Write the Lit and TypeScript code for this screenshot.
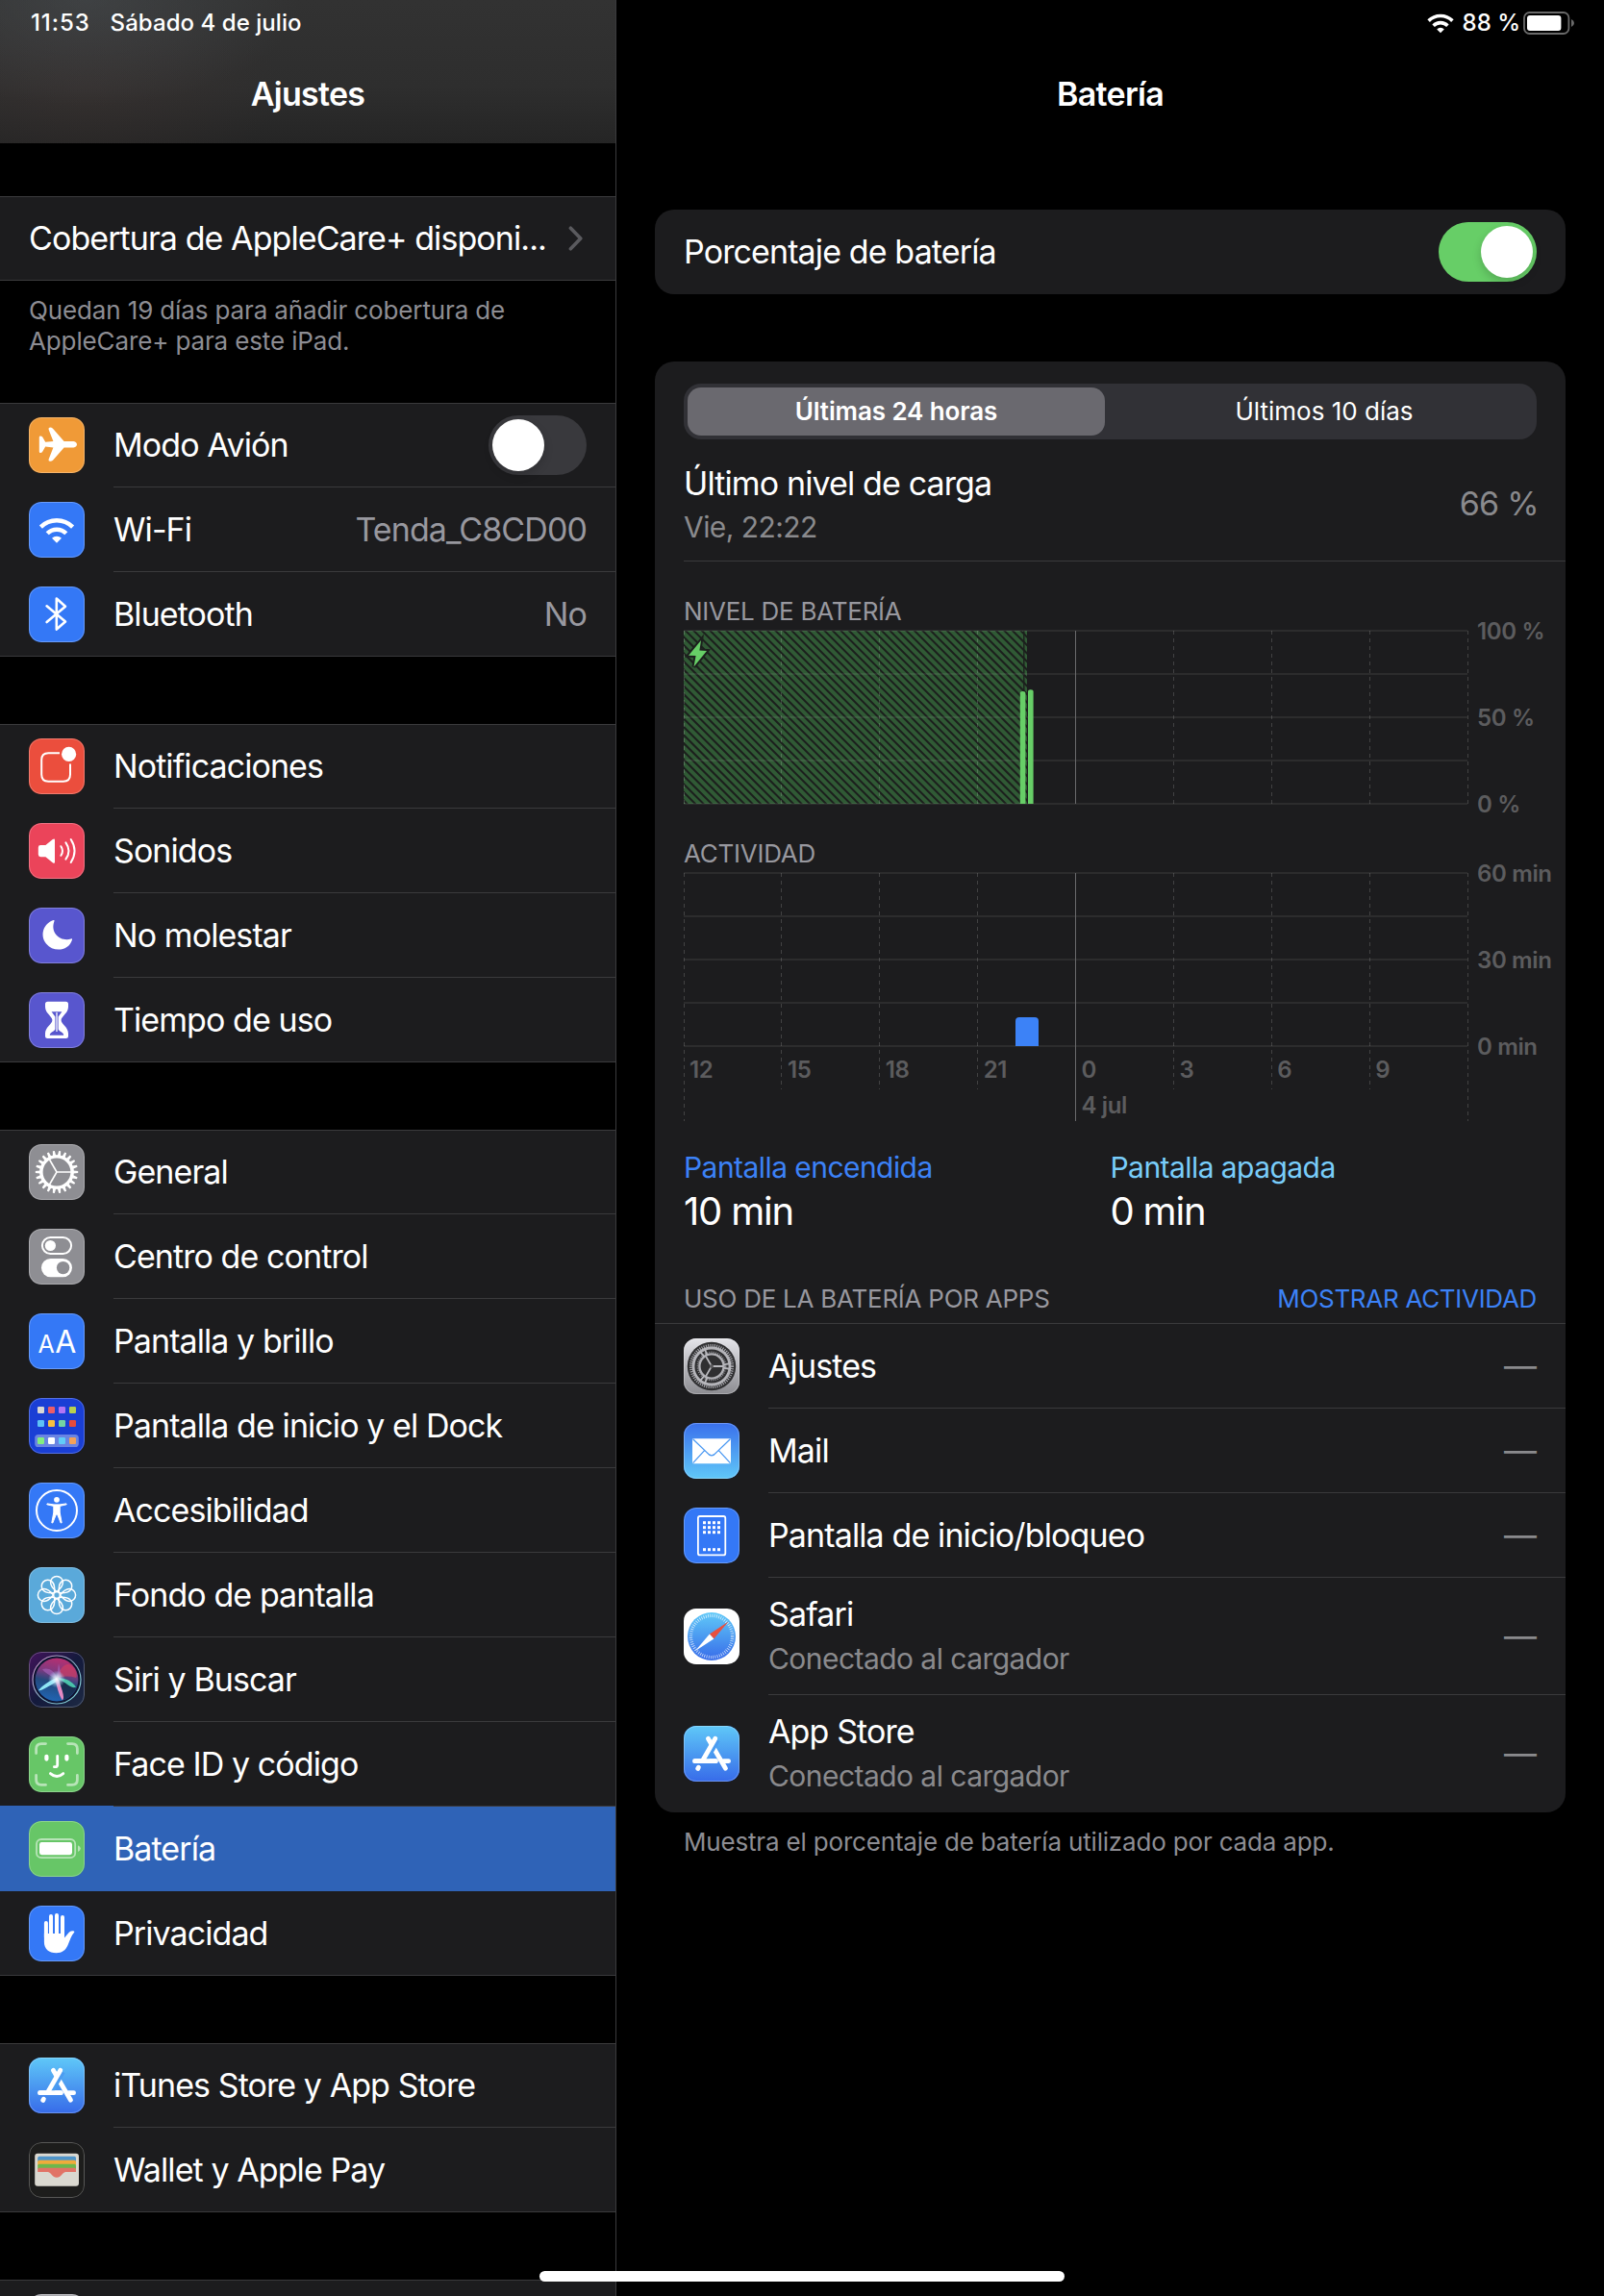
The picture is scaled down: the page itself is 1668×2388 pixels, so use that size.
import { LitElement, css, html, nothing, svg } from 'lit';
import type { TemplateResult } from 'lit';
import { customElement, property } from 'lit/decorators.js';
import { classMap } from 'lit/directives/class-map.js';

// All icons are drawn on a 58x58 grid, the tile itself comes from <icon-tile>.

function gearPath(teeth: number, outer: number, inner: number) {
  const step = (Math.PI * 2) / teeth;
  const at = (r: number, a: number) =>
    `${(29 + r * Math.cos(a)).toFixed(2)} ${(29 + r * Math.sin(a)).toFixed(2)}`;
  let d = '';
  for (let i = 0; i < teeth; i++) {
    const a = i * step;
    d += `${i ? 'L' : 'M'}${at(inner, a - step * 0.32)}L${at(outer, a - step * 0.16)}`;
    d += `L${at(outer, a + step * 0.16)}L${at(inner, a + step * 0.32)}`;
  }
  return d + 'Z';
}

const spokes = (r: number) =>
  [0, 120, 240].map(
    (a) => svg`<path d="M29 29H${29 + r}" transform="rotate(${a} 29 29)" />`
  );

const dots = (size: number, xs: number[], ys: number[]) =>
  ys.map((y) =>
    xs.map((x) => svg`<rect x=${x} y=${y} width=${size} height=${size} />`)
  );

const appStore = svg`
  <defs>
    <linearGradient id="store" x1="0" y1="0" x2="0" y2="1">
      <stop offset="0" stop-color="#5fc8f8" />
      <stop offset="1" stop-color="#376be9" />
    </linearGradient>
  </defs>
  <rect width="58" height="58" fill="url(#store)" />
  <g fill="none" stroke="#fff" stroke-width="4.8" stroke-linecap="round">
    <path d="M25.4 13.2 L43.5 44.3" />
    <path d="M11.6 36.7 H33.5 M41.5 36.7 H46.6" />
    <path d="M15.4 43.2 L14.7 44.5" />
    <path d="M34.6 14.5 L21.5 37.4" stroke="#4b9cf1" stroke-width="6.6" stroke-linecap="butt" />
    <path d="M32.8 13.2 L20 35.5" />
    <path d="M11.6 36.7 H33" />
  </g>`;

const petals = [0, 45, 90, 135, 180, 225, 270, 315];

const icons: Record<string, { bg: string; art: unknown }> = {
  airplane: {
    bg: '#f09a37',
    art: svg`<path fill="#fff" d="M46.5 24.9H36.6L25 11.7Q23.8 10.6 22 10.6Q20 10.8 20.6 12.7L25.4 24.9L17.2 25.8L14.2 20.6Q13.4 19.4 12 19.4Q10.8 19.4 10.8 20.7V35.7Q10.8 37 12 37Q13.4 37 14.2 35.8L17.2 30.6L25.4 31.5L20.6 43.7Q20 45.6 22 45.8Q23.8 45.8 25 44.7L36.6 31.5H46.5Q50 30.6 50 28.2Q50 25.8 46.5 24.9Z" />`,
  },
  wifi: {
    bg: '#3478f6',
    art: svg`
      <g fill="none" stroke="#fff" stroke-width="4.4">
        <path d="M12.4 26.1A23.5 23.5 0 0 1 45.6 26.1" />
        <path d="M19.2 32.8A13.9 13.9 0 0 1 38.8 32.8" />
      </g>
      <path fill="#fff" d="M29 42.8L24 37.8A7.1 7.1 0 0 1 34 37.8Z" />`,
  },
  bluetooth: {
    bg: '#3478f6',
    art: svg`<path fill="none" stroke="#fff" stroke-width="2.6" stroke-linecap="round" stroke-linejoin="round" d="M18.6 20.3L38 36.6L28.8 44.6V12.6L38 20.7L18.6 37" />`,
  },
  notifications: {
    bg: '#eb4e3d',
    art: svg`
      <path fill="none" stroke="#fff" stroke-width="2" d="M32 15.2H20.3Q13.2 15.2 13.2 22.3V37.6Q13.2 44.8 20.3 44.8H35.8Q43 44.8 43 37.6V26.4" />
      <circle cx="41.6" cy="16.4" r="7.6" fill="#fff" />`,
  },
  sounds: {
    bg: '#eb445a',
    art: svg`
      <path fill="#fff" d="M12.2 23H17.4L24.8 17Q27 15.6 27 17.8V40.6Q27 42.8 24.8 41.2L17.4 35.2H12.2Q9.8 35.2 9.8 32.8V25.4Q9.8 23 12.2 23Z" />
      <path fill="none" stroke="#fff" stroke-width="2" stroke-linecap="round" d="M33.4 24.2Q36.6 29 33.4 33.8M38.4 20.3Q44.6 29 38.4 37.7M43.7 17Q51.4 29 43.7 41" />`,
  },
  moon: {
    bg: '#5856ce',
    art: svg`<path fill="#fff" d="M25.6 13C14.6 16.8 11.4 29.2 18 37.4C26 47.2 41.4 45 45 33.4C45.2 32.4 44.7 32.1 43.8 32.5C33.4 35.6 21.8 27 26.4 14.2C26.7 13.2 26.4 12.7 25.6 13Z" />`,
  },
  hourglass: {
    bg: '#5856ce',
    art: svg`
      <path fill="#fff" d="M19.5 9.8H38.5Q41 9.8 41 12.3V15.2C41 21.8 33.6 25 33.6 29C33.6 33 41 36.2 41 42.8V45.6Q41 48.1 38.5 48.1H19.5Q17 48.1 17 45.6V42.8C17 36.2 24.4 33 24.4 29C24.4 25 17 21.8 17 15.2V12.3Q17 9.8 19.5 9.8Z" />
      <path fill="#5856ce" d="M23.6 20.2H34.4L30.6 25.4V38.6C31.4 41 36.2 41.6 36.2 44.8H21.8C21.8 41.6 26.6 41 27.4 38.6V25.4Z" />
      <path stroke="#fff" stroke-width="1.3" d="M29 21V41" />`,
  },
  gear: {
    bg: '#8e8e93',
    art: svg`
      <path fill="#fff" d=${gearPath(22, 22.2, 17.4)} />
      <circle cx="29" cy="29" r="16.1" fill="#8e8e93" stroke="#fff" stroke-width="3.4" />
      <g stroke="#fff" stroke-width="1.6">${spokes(15)}</g>`,
  },
  controls: {
    bg: '#8e8e93',
    art: svg`
      <rect x="13.9" y="8.9" width="30.2" height="17.2" rx="8.6" fill="none" stroke="#fff" stroke-width="2" />
      <circle cx="22.4" cy="17.5" r="5.6" fill="#fff" />
      <rect x="13" y="31" width="32" height="19.2" rx="9.6" fill="#fff" />
      <circle cx="35.6" cy="40.6" r="6.7" fill="#8e8e93" />`,
  },
  display: {
    bg: '#3478f6',
    art: svg`
      <g fill="#fff" font-family="Inter, sans-serif" font-weight="400">
        <text x="9.4" y="41.3" font-size="25">A</text>
        <text x="27.2" y="41.3" font-size="32">A</text>
      </g>`,
  },
  homeScreen: {
    bg: '#1a3fd5',
    art: svg`
      <rect x="6.2" y="38" width="45.6" height="13" rx="3.6" fill="#6a84e2" />
      ${[
        ['#d8d8d6', '#ec5d68', '#b275f5', '#b9d04f'],
        ['#5dc2f6', '#f6c040', '#73d4a2', '#e54b3c'],
        ['#83ee80', '#ffffff', '#60ccf8', '#f2a159'],
      ].map((row, r) =>
        row.map(
          (fill, c) =>
            svg`<rect x=${9 + c * 11} y=${[9, 23, 41][r]} width="7" height="7" rx="1.2" fill=${fill} />`
        )
      )}`,
  },
  accessibility: {
    bg: '#3478f6',
    art: svg`
      <circle cx="29" cy="29" r="21" fill="none" stroke="#fff" stroke-width="2" />
      <circle cx="29" cy="17.8" r="2.9" fill="#fff" />
      <path fill="#fff" stroke="#fff" stroke-width="1" stroke-linejoin="round" d="M19 21.9L26 22.9H32L39 21.9L39.2 22.8L32.2 24.4V31L34.2 41.8L33.2 42L29.6 33H28.4L24.8 42L23.8 41.8L25.8 31V24.4L18.8 22.8Z" />`,
  },
  wallpaper: {
    bg: '#5aa9da',
    art: svg`
      <g fill="none" stroke="#fff" stroke-width="1.5">
        ${petals.map(
          (a) =>
            svg`<path transform="rotate(${a} 29 29)" d="M29 25.6C25.6 22.8 22.6 20 22.6 15.8A6.4 6.4 0 0 1 35.4 15.8C35.4 20 32.4 22.8 29 25.6Z" />`
        )}
        <circle cx="29" cy="29" r="3.4" />
      </g>`,
  },
  siri: {
    bg: '#141a38',
    art: svg`
      <defs>
        <linearGradient id="siri-bg" x1="0" y1="0" x2="1" y2="1">
          <stop offset="0" stop-color="#43135c" />
          <stop offset=".5" stop-color="#141a3c" />
          <stop offset="1" stop-color="#1d2a44" />
        </linearGradient>
        <linearGradient id="siri-orb" x1=".6" y1="0" x2=".4" y2="1">
          <stop offset="0" stop-color="#b92f70" />
          <stop offset=".34" stop-color="#7d3a80" />
          <stop offset=".56" stop-color="#23497c" />
          <stop offset="1" stop-color="#2165b4" />
        </linearGradient>
        <linearGradient id="siri-ring" x1="0" y1="0" x2="1" y2="1">
          <stop offset="0" stop-color="#d58fc8" />
          <stop offset=".5" stop-color="#86a9c0" />
          <stop offset="1" stop-color="#7fe0e0" />
        </linearGradient>
        <radialGradient id="siri-glow">
          <stop offset="0" stop-color="#fff" />
          <stop offset=".4" stop-color="#d9f3ff" stop-opacity=".7" />
          <stop offset="1" stop-color="#9fd8ff" stop-opacity="0" />
        </radialGradient>
      </defs>
      <rect width="58" height="58" fill="url(#siri-bg)" />
      <circle cx="29" cy="29" r="25" fill="#0d1230" stroke="url(#siri-ring)" stroke-width="1.2" />
      <circle cx="29" cy="29" r="22.4" fill="url(#siri-orb)" />
      <path fill="#d8405f" opacity=".6" d="M29 28C31 18 38 10 44 14C49 18 51 24 49 27C42 25 35 25 29 28Z" />
      <path fill="#a868c0" opacity=".6" d="M28 28C22 25 16 21 14 18C20 16 26 19 29 26L31 12L34 26Z" />
      <path fill="#16243f" opacity=".75" d="M31 30C38 31 46 35 49 38C46 45 40 49 36 50Z" />
      <path fill="#4fd8b4" opacity=".85" d="M30 27.4C38 27 45 31 49 36.6C46.6 38.6 42 36 38 32.6Z" />
      <path fill="#8fe6f5" d="M29 27C22 30 14 35 10 40C12 41.4 20 36 30 30.4Z" />
      <path fill="#e58ac4" d="M27.6 29C29 36 31 44 34.4 50C36.6 50 36.4 46 34.6 40L31 29Z" />
      <circle cx="29" cy="28.5" r="9" fill="url(#siri-glow)" />`,
  },
  faceId: {
    bg: '#67c667',
    art: svg`
      <g fill="none" stroke-linecap="round">
        <path stroke="#b8e4b8" stroke-width="2.8" d="M7.6 17.5V13Q7.6 7.6 13 7.6H17.5M40.5 7.6H45Q50.4 7.6 50.4 13V17.5M50.4 40.5V45Q50.4 50.4 45 50.4H40.5M17.5 50.4H13Q7.6 50.4 7.6 45V40.5" />
        <path stroke="#fff" stroke-width="4.2" d="M18.4 20.8V23.6M39.4 20.8V23.6" />
        <path stroke="#fff" stroke-width="2.8" d="M29.7 20.4V29.4Q29.7 31.7 27.3 31.7H26.4M22.4 38.6Q29 44.4 35.8 38.6" />
      </g>`,
  },
  battery: {
    bg: '#67c667',
    art: svg`
      <rect x="8" y="19" width="40.2" height="19.2" rx="5" fill="none" stroke="#b8e4b8" stroke-width="1.8" />
      <rect x="11" y="22" width="34" height="13.2" rx="2.4" fill="#fff" />
      <path fill="#b8e4b8" d="M51 25.2Q53.8 26.4 53.8 28.6Q53.8 30.8 51 32Z" />`,
  },
  hand: {
    bg: '#3478f6',
    art: svg`
      <g stroke="#fff" stroke-width="4" stroke-linecap="round">
        <path d="M17.9 18V33M23 11V32M29 10V32M35 12V32" />
      </g>
      <path fill="#fff" d="M15.9 29H37V33.4L41.6 28Q43.6 25.6 47 26.6Q47.8 27.2 47 28C44.2 31 43 35.6 40.6 41C38.4 46.2 34.6 49.2 28.6 49.2C20.6 49.2 15.9 45.2 15.9 37.5Z" />`,
  },
  appStore: { bg: '#376be9', art: appStore },
  wallet: {
    bg: '#1d1d1c',
    art: svg`
      <rect x="6.2" y="11.8" width="45.8" height="34" rx="3" fill="#dad8d0" />
      <rect x="9.2" y="14.8" width="39.8" height="6" rx="1.6" fill="#5095c9" />
      <rect x="9.2" y="18.8" width="39.8" height="6" rx="1.6" fill="#efac3b" />
      <rect x="9.2" y="22.8" width="39.8" height="6" rx="1.6" fill="#6db74c" />
      <path fill="#e17366" d="M10.8 26.8H47.4Q49 26.8 49 28.4V31H38.5C35 31 33.6 36.8 29 36.8C24.4 36.8 23 31 19.5 31H9.2V28.4Q9.2 26.8 10.8 26.8Z" />`,
  },
  plain: { bg: '#a9a9ae', art: nothing },
  settingsApp: {
    bg: '#8e8e93',
    art: svg`
      <defs>
        <linearGradient id="metal" x1="0" y1="0" x2="0" y2="1">
          <stop offset="0" stop-color="#e4e4e9" />
          <stop offset="1" stop-color="#8c8c91" />
        </linearGradient>
      </defs>
      <rect width="58" height="58" fill="url(#metal)" />
      <circle cx="29" cy="29" r="25.2" fill="#2f2f31" />
      <circle cx="29" cy="29" r="21.6" fill="none" stroke="#a5a5aa" stroke-width="3" stroke-dasharray="1.1 1.16" />
      <circle cx="29" cy="29" r="19" fill="none" stroke="#b4b4b9" stroke-width="2.8" />
      <circle cx="29" cy="29" r="14.6" fill="none" stroke="#8d8d92" stroke-width="1.6" stroke-dasharray="1.1 1.16" />
      <circle cx="29" cy="29" r="12.6" fill="none" stroke="#b0b0b5" stroke-width="2.4" />
      <g stroke="#b8b8bd" stroke-width="1.8">
        ${[0, 120, 240].map(
          (a) =>
            svg`<path transform="rotate(${a} 29 29)" d="M29 29H41M41 27.4L49 26M41 30.6L49 32" />`
        )}
      </g>
      <circle cx="29" cy="29" r="2" fill="#5a5a5d" />`,
  },
  mail: {
    bg: '#3b72ee',
    art: svg`
      <defs>
        <linearGradient id="mail" x1="0" y1="0" x2="0" y2="1">
          <stop offset="0" stop-color="#3a70ec" />
          <stop offset="1" stop-color="#60c8f8" />
        </linearGradient>
      </defs>
      <rect width="58" height="58" fill="url(#mail)" />
      <rect x="9" y="16.2" width="40" height="26" rx="1" fill="#fff" />
      <path fill="none" stroke="#4a98f2" stroke-width="1.3" d="M9.6 16.8L24 30.6Q29 37 34 30.6L48.4 16.8M9.6 41.6L21.6 28.6M48.4 41.6L36.4 28.6" />`,
  },
  lockScreen: {
    bg: '#3478f6',
    art: svg`
      <rect x="14.9" y="9" width="28.4" height="40.4" rx="2" fill="none" stroke="#fff" stroke-width="1.8" />
      <g fill="#fff">${dots(3, [20, 25, 30, 35], [14.2, 19.2, 24.2, 42.2])}</g>`,
  },
  safari: {
    bg: '#ffffff',
    art: svg`
      <defs>
        <linearGradient id="safari" x1="0" y1="0" x2="0" y2="1">
          <stop offset="0" stop-color="#60c9f8" />
          <stop offset="1" stop-color="#376be9" />
        </linearGradient>
      </defs>
      <circle cx="29" cy="29" r="25" fill="url(#safari)" />
      <circle cx="29" cy="29" r="21.6" fill="none" stroke="#fff" stroke-opacity=".75" stroke-width="3.4" stroke-dasharray=".8 1.46" />
      <path fill="#e9503f" d="M46.6 13.6L26.9 26.5L31.3 31.6Z" />
      <path fill="#fff" d="M11.8 44.2L26.9 26.5L31.3 31.6Z" />`,
  },
};

@customElement('icon-tile')
export class IconTile extends LitElement {
  @property()
  name = '';

  render() {
    const icon = icons[this.name];
    return html`
      <svg viewBox="0 0 58 58">
        <rect width="58" height="58" fill=${icon.bg} />
        ${icon.art}
        <rect class="edge" x=".5" y=".5" width="57" height="57" rx="12.5" />
      </svg>
    `;
  }

  static styles = css`
    :host {
      display: block;
      flex: none;
      width: 58px;
      height: 58px;
      border-radius: 13px;
      overflow: hidden;
    }
    svg {
      display: block;
      width: 58px;
      height: 58px;
    }
    .edge {
      fill: none;
      stroke: #fff;
      stroke-opacity: 0.26;
    }
  `;
}

@customElement('toggle-switch')
export class ToggleSwitch extends LitElement {
  @property({ type: Boolean, reflect: true })
  on = false;

  render() {
    return html`<span class="knob"></span>`;
  }

  static styles = css`
    :host {
      display: flex;
      box-sizing: border-box;
      flex: none;
      width: 102px;
      height: 62px;
      padding: 4px;
      border-radius: 31px;
      background: #39393d;
    }
    :host([on]) {
      justify-content: flex-end;
      background: #67ce67;
    }
    .knob {
      width: 54px;
      height: 54px;
      border-radius: 50%;
      background: #fff;
      box-shadow: 0 4px 10px rgba(0, 0, 0, 0.18);
    }
  `;
}

const W = 815;
const TOP = 5;
const H = 180;
const hours = ['12', '15', '18', '21', '0', '3', '6', '9', ''];

// diagonal stripes over the charging period
const CHARGE_W = 357;
const STRIPE = 8.5;
const stripes = Array.from(
  { length: Math.ceil((CHARGE_W + H) / STRIPE) + 1 },
  (_, i) => `M${3.5 - H - 3 + (i * STRIPE)} -3l${H + 6} ${H + 6}`
).join('');

@customElement('usage-chart')
export class UsageChart extends LitElement {
  @property()
  kind: 'level' | 'activity' = 'level';

  private _grid(axis: string[]) {
    const isActivity = this.kind === 'activity';
    return svg`
      ${[0, 1, 2, 3, 4].map(
        (i) => svg`<path class="line" d="M0 ${TOP + i * 45}H${W}" />`
      )}
      ${hours.map((hour, i) => {
        const x = Math.floor((i * W) / 8) + 0.5;
        let end = TOP + H;
        if (isActivity) end += i % 4 === 0 ? 78 : 45;
        return svg`<path class=${hour === '0' ? 'midnight' : 'tick'} d="M${x} ${TOP}V${end}" />`;
      })}
      ${axis.map(
        (label, i) => svg`<text x="825" y=${TOP + i * 90 + 8.7}>${label}</text>`
      )}`;
  }

  private _level() {
    return svg`
      <svg class="charge" x="0" y=${TOP} width=${CHARGE_W} height=${H}>
        <rect width=${CHARGE_W} height=${H} fill="#305a35" />
        <path stroke="#1c1f1d" stroke-width="2" d=${stripes} />
      </svg>
      <path stroke="#1c1f1d" stroke-width="1.4" d="M353.8 ${TOP}V70" />
      ${this._grid(['100 %', '50 %', '0 %'])}
      <path class="bar" d="M349.8 ${TOP + H}V70.4Q349.8 68 352.6 68Q355.4 68 355.4 70.4V${TOP + H}Z" />
      <path class="bar" d="M358 ${TOP + H}V68.6Q358 66.2 360.8 66.2Q363.6 66.2 363.6 68.6V${TOP + H}Z" />
      <path class="bolt" d="M18 15L5 30.7L12.6 31L10.5 42.6L24 26L16.4 25.6Z" />`;
  }

  private _activity() {
    return svg`
      ${this._grid(['60 min', '30 min', '0 min'])}
      <path fill="#3c82f7" d="M345 ${TOP + H}V159Q345 155 349 155H365Q369 155 369 159V${TOP + H}Z" />
      ${hours.map(
        (hour, i) => svg`<text x=${6 + i * (W / 8)} y="218.3">${hour}</text>`
      )}
      <text x="413.5" y="255">4 jul</text>`;
  }

  render() {
    return html`
      <svg width="917" height=${this.kind === 'level' ? 220 : 293}>
        ${this.kind === 'level' ? this._level() : this._activity()}
      </svg>
    `;
  }

  static styles = css`
    :host,
    svg {
      display: block;
    }
    svg {
      overflow: visible;
    }
    .charge {
      overflow: hidden;
    }
    .line {
      stroke: rgba(255, 255, 255, 0.07);
      stroke-width: 2;
    }
    .tick {
      stroke: rgba(255, 255, 255, 0.17);
      stroke-width: 1;
      stroke-dasharray: 4 4;
    }
    .midnight {
      stroke: #6a6a6c;
      stroke-width: 1;
    }
    .bar {
      fill: #67ce67;
    }
    .bolt {
      fill: #67ce67;
      stroke: #1c1f1d;
      stroke-width: 4;
      paint-order: stroke;
    }
    text {
      fill: #5c5c5e;
      font-size: 24px;
      font-weight: 600;
      letter-spacing: -0.35px;
    }
  `;
}

interface Row {
  icon?: string;
  label: string;
  sub?: string;
  value?: string;
  toggle?: boolean;
  selected?: boolean;
}

const groups: Row[][] = [
  [
    { icon: 'airplane', label: 'Modo Avión', toggle: true },
    { icon: 'wifi', label: 'Wi-Fi', value: 'Tenda_C8CD00' },
    { icon: 'bluetooth', label: 'Bluetooth', value: 'No' },
  ],
  [
    { icon: 'notifications', label: 'Notificaciones' },
    { icon: 'sounds', label: 'Sonidos' },
    { icon: 'moon', label: 'No molestar' },
    { icon: 'hourglass', label: 'Tiempo de uso' },
  ],
  [
    { icon: 'gear', label: 'General' },
    { icon: 'controls', label: 'Centro de control' },
    { icon: 'display', label: 'Pantalla y brillo' },
    { icon: 'homeScreen', label: 'Pantalla de inicio y el Dock' },
    { icon: 'accessibility', label: 'Accesibilidad' },
    { icon: 'wallpaper', label: 'Fondo de pantalla' },
    { icon: 'siri', label: 'Siri y Buscar' },
    { icon: 'faceId', label: 'Face ID y código' },
    { icon: 'battery', label: 'Batería', selected: true },
    { icon: 'hand', label: 'Privacidad' },
  ],
  [
    { icon: 'appStore', label: 'iTunes Store y App Store' },
    { icon: 'wallet', label: 'Wallet y Apple Pay' },
  ],
  [{ icon: 'plain', label: '' }],
];

const apps: Row[] = [
  { icon: 'settingsApp', label: 'Ajustes' },
  { icon: 'mail', label: 'Mail' },
  { icon: 'lockScreen', label: 'Pantalla de inicio/bloqueo' },
  { icon: 'safari', label: 'Safari', sub: 'Conectado al cargador' },
  { icon: 'appStore', label: 'App Store', sub: 'Conectado al cargador' },
];

@customElement('app-root')
export class AppRoot extends LitElement {
  private _group(rows: Row[]): TemplateResult {
    return html`
      <div class="group">
        ${rows.map(
          (row) => html`
            <div class=${classMap({ row: true, selected: !!row.selected })}>
              <icon-tile name=${row.icon}></icon-tile>
              <div class="cell">
                <span class="label">${row.label}</span>
                ${row.value ? html`<span class="value">${row.value}</span>` : nothing}
                ${row.toggle ? html`<toggle-switch></toggle-switch>` : nothing}
              </div>
            </div>
          `
        )}
      </div>
    `;
  }

  private _sidebar() {
    return html`
      <aside>
        <header class="side-header">
          <div class="status">
            <span class="time">11:53</span>
            <span class="date">Sábado 4 de julio</span>
          </div>
          <h1>Ajustes</h1>
        </header>
        <div class="group coverage">
          <div class="row">
            <div class="cell">
              <span class="label">Cobertura de AppleCare+ disponi...</span>
              <svg class="chevron" width="16" height="26">
                <path d="M2.4 2.2L12.8 13L2.4 23.8" />
              </svg>
            </div>
          </div>
        </div>
        <p class="note">
          Quedan 19 días para añadir cobertura de<br />AppleCare+ para este iPad.
        </p>
        <nav>${groups.map((rows) => this._group(rows))}</nav>
      </aside>
    `;
  }

  private _status() {
    return html`
      <div class="status right">
        <svg class="wifi" width="28" height="21" viewBox="0 0 28 21">
          <g fill="none" stroke="#fff" stroke-width="3.6">
            <path d="M1.6 7.6A17.6 17.6 0 0 1 26.4 7.6" />
            <path d="M6.6 12.7A10.5 10.5 0 0 1 21.4 12.7" />
          </g>
          <path fill="#fff" d="M14 20.2L10.2 16.4A5.4 5.4 0 0 1 17.8 16.4Z" />
        </svg>
        <span>88 %</span>
        <svg class="level" width="54" height="24" viewBox="0 0 54 24">
          <rect x="1" y="1" width="46.4" height="22" rx="5.6" fill="none" stroke="#6a6a6a" stroke-width="1.8" />
          <rect x="4" y="4" width="35.4" height="16" rx="3" fill="#fff" />
          <path fill="#6a6a6a" d="M50 8Q53 9.4 53 12Q53 14.6 50 16Z" />
        </svg>
      </div>
    `;
  }

  private _detail() {
    return html`
      <main>
        <header>
          ${this._status()}
          <h1>Batería</h1>
        </header>
        <section class="card percent">
          <span class="label">Porcentaje de batería</span>
          <toggle-switch on></toggle-switch>
        </section>
        <section class="card">
          <div class="segments">
            <span class="active">Últimas 24 horas</span>
            <span>Últimos 10 días</span>
          </div>
          <div class="summary">
            <div>
              <div class="label">Último nivel de carga</div>
              <div class="sub">Vie, 22:22</div>
            </div>
            <span class="amount">66 %</span>
          </div>
          <div class="charts">
            <h2>NIVEL DE BATERÍA</h2>
            <usage-chart kind="level"></usage-chart>
            <h2>ACTIVIDAD</h2>
            <usage-chart kind="activity"></usage-chart>
          </div>
          <div class="stats">
            <div>
              <div class="stat-name on">Pantalla encendida</div>
              <div class="stat-value">10 min</div>
            </div>
            <div>
              <div class="stat-name off">Pantalla apagada</div>
              <div class="stat-value">0 min</div>
            </div>
          </div>
          <div class="list-head">
            <h2>USO DE LA BATERÍA POR APPS</h2>
            <a>MOSTRAR ACTIVIDAD</a>
          </div>
          <div class="apps">
            ${apps.map(
              (app) => html`
                <div class=${classMap({ row: true, tall: !!app.sub })}>
                  <icon-tile name=${app.icon}></icon-tile>
                  <div class="cell">
                    <div class="names">
                      <div class="label">${app.label}</div>
                      ${app.sub ? html`<div class="sub">${app.sub}</div>` : nothing}
                    </div>
                    <span class="dash">—</span>
                  </div>
                </div>
              `
            )}
          </div>
        </section>
        <p class="note">Muestra el porcentaje de batería utilizado por cada app.</p>
      </main>
    `;
  }

  render() {
    return html`
      ${this._sidebar()} ${this._detail()}
      <div class="home-indicator"></div>
    `;
  }

  static styles = css`
    :host {
      display: flex;
      position: relative;
      width: 1668px;
      height: 2388px;
      overflow: hidden;
      background: #000;
      color: #fff;
      font-family: Inter, 'Liberation Sans', sans-serif;
      font-size: 34px;
      line-height: 40px;
    }
    * {
      box-sizing: border-box;
    }
    h1,
    h2,
    p {
      margin: 0;
      font-weight: 400;
    }
    aside {
      flex: none;
      width: 641px;
      border-right: 1px solid #3a3a3c;
    }
    main {
      flex: 1;
      padding: 0 40px;
    }
    header {
      height: 149px;
      margin: 0 -40px;
    }
    .side-header {
      margin: 0 0 55px;
      background: radial-gradient(
          220px 110px at 90px 0,
          rgba(74, 80, 84, 0.5),
          transparent
        ),
        radial-gradient(200px 110px at 90px 90px, rgba(70, 55, 52, 0.3), transparent),
        linear-gradient(#323232, #2e2e2e 60%, #252525);
    }
    h1 {
      padding-top: 30px;
      text-align: center;
      font-size: 34px;
      font-weight: 600;
      letter-spacing: -0.7px;
    }
    .status {
      display: flex;
      align-items: center;
      height: 48px;
      padding-left: 32px;
      font-size: 24px;
      font-weight: 500;
      line-height: 48px;
      letter-spacing: 0;
    }
    .time {
      letter-spacing: 0.9px;
    }
    .date {
      margin-left: 21px;
      letter-spacing: 0.05px;
    }
    .status.right {
      justify-content: flex-end;
      padding: 0 30px 0 0;
    }
    .wifi {
      margin-right: 9px;
    }
    .level {
      margin-left: 3px;
    }

    /* hairlines sit inside the group so that its height is rows * 88 */
    .group {
      background: #1c1c1e;
      box-shadow: inset 0 1px #3a3a3c, inset 0 -1px #3a3a3c;
    }
    nav {
      display: grid;
      gap: 70px;
    }
    .row {
      display: flex;
      align-items: center;
      height: 88px;
      padding-left: 30px;
    }
    .cell {
      display: flex;
      flex: 1;
      align-items: center;
      justify-content: space-between;
      min-width: 0;
      height: 88px;
      margin-left: 30px;
      padding: 1px 30px 0 0;
      border-bottom: 1px solid #3a3a3c;
      white-space: nowrap;
    }
    .row:last-child .cell,
    .row.selected .cell {
      border-bottom-color: transparent;
    }
    .row.selected {
      height: 89px;
      margin-top: -1px;
      padding-top: 1px;
      background: #2f63b7;
    }
    .coverage .cell {
      margin-left: 0;
      padding-right: 33px;
    }
    .label {
      letter-spacing: -0.92px;
    }
    .chevron path {
      fill: none;
      stroke: #5a5a5e;
      stroke-width: 3.6;
      stroke-linecap: round;
      stroke-linejoin: round;
    }
    .value {
      color: #98989f;
      letter-spacing: -0.9px;
    }
    .note {
      color: #8d8d93;
      font-size: 26px;
      line-height: 32px;
      letter-spacing: -0.18px;
    }
    aside .note {
      height: 127px;
      padding: 15px 30px 0;
      letter-spacing: -0.13px;
    }

    .card {
      border-radius: 20px;
      background: #1c1c1e;
      overflow: hidden;
    }
    .percent {
      display: flex;
      align-items: center;
      justify-content: space-between;
      height: 88px;
      margin: 69px 0 70px;
      padding: 0 30px;
    }
    .card .label {
      letter-spacing: -0.88px;
    }
    .segments {
      display: flex;
      gap: 11px;
      height: 58px;
      margin: 23px 30px 0;
      padding: 4px;
      border-radius: 18px;
      background: #313136;
      font-size: 26px;
      line-height: 50px;
      text-align: center;
      letter-spacing: 0;
    }
    .segments span {
      flex: 1;
      border-radius: 14px;
    }
    .segments .active {
      background: #6a696f;
      font-weight: 600;
      letter-spacing: -0.1px;
    }
    .summary {
      display: flex;
      align-items: center;
      justify-content: space-between;
      height: 127px;
      margin-left: 30px;
      padding: 8px 28px 0 0;
      border-bottom: 1px solid #3a3a3c;
    }
    .summary .label {
      padding-top: 1px;
    }
    .sub {
      margin-top: 7px;
      color: #8a8a8d;
      font-size: 30px;
      line-height: 36px;
      letter-spacing: -0.55px;
    }
    .amount {
      color: #8a8a8d;
      letter-spacing: -0.7px;
    }
    .charts {
      padding: 35px 0 0 30px;
    }
    h2 {
      margin: 1px 0 -1px;
      color: #98989f;
      font-size: 26px;
      line-height: 32px;
      letter-spacing: -0.26px;
    }
    .stats {
      display: grid;
      grid-template-columns: 1fr 1fr;
      padding: 0 30px;
    }
    .stat-name {
      font-size: 30px;
      line-height: 36px;
      letter-spacing: -0.56px;
    }
    .on {
      color: #3c82f7;
    }
    .off {
      color: #79cdfa;
    }
    .stat-value {
      margin-top: 4px;
      font-size: 40px;
      line-height: 48px;
      letter-spacing: -1.2px;
    }
    .list-head {
      display: flex;
      justify-content: space-between;
      padding: 50px 30px 10px;
      border-bottom: 1px solid #3a3a3c;
    }
    a {
      margin: 1px 0 -1px;
      color: #3c82f7;
      font-size: 26px;
      line-height: 32px;
      letter-spacing: -0.3px;
    }
    .apps .row.tall,
    .apps .tall .cell {
      height: 122px;
    }
    .tall .names {
      padding-bottom: 3px;
    }
    .tall .sub {
      margin-top: 8px;
    }
    .dash {
      color: #8a8a8d;
    }
    main .note {
      padding: 15px 30px 0;
    }
    .home-indicator {
      position: absolute;
      bottom: 15px;
      left: 561px;
      width: 546px;
      height: 11px;
      border-radius: 6px;
      background: #fff;
    }
  `;
}

declare global {
  interface HTMLElementTagNameMap {
    'app-root': AppRoot;
    'icon-tile': IconTile;
    'toggle-switch': ToggleSwitch;
    'usage-chart': UsageChart;
  }
}
